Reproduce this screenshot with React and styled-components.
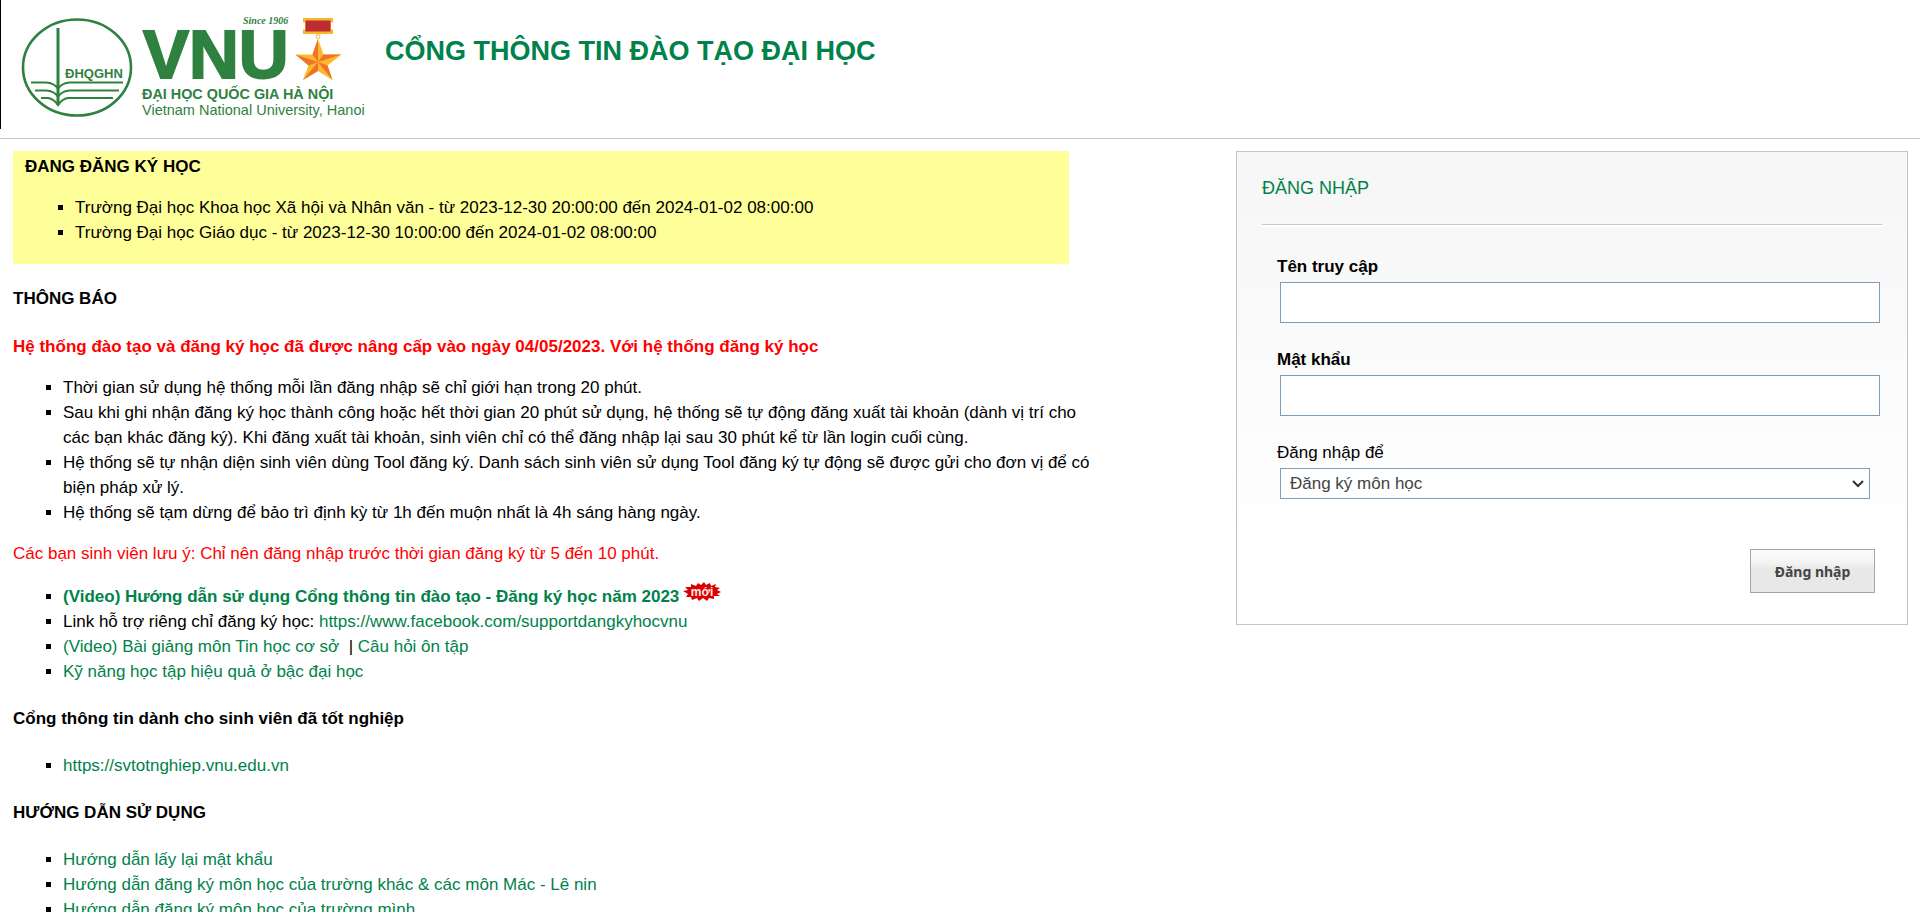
import React from "react";
import styled, { createGlobalStyle, css } from "styled-components";

const GREEN = "#00824a";

const GlobalStyle = createGlobalStyle`
  * { box-sizing: border-box; }
  body {
    margin: 0;
    background: #fff;
    color: #000;
    font: 17px/25px "Liberation Sans", Arial, sans-serif;
  }
`;

const Header = styled.header`
  display: flex;
  align-items: flex-start;
  height: 139px;
  border-bottom: 1px solid #c4c4c4;
`;

const LogoLink = styled.a`
  display: block;
  flex: none;
  width: 385px;
  height: 129px;
  border-left: 1px solid #000;
`;

const SiteTitle = styled.h1`
  margin: 35px 0 0;
  color: ${GREEN};
  font-size: 27px;
  line-height: 32px;
`;

const Columns = styled.div`
  display: flex;
  justify-content: space-between;
  align-items: flex-start;
  padding-top: 12px;
`;

const News = styled.main`
  width: 55%;
  margin-left: 13px;
`;

const Notice = styled.section`
  padding: 3px 12px;
  background: #ffff99;
`;

const headingText = css`
  margin: 0;
  font-size: 17px;
  font-weight: bold;
`;

const NoticeTitle = styled.h2`
  ${headingText}
`;

const SectionTitle = styled.h2`
  ${headingText}
  margin: 22px 0;
`;

const Alert = styled.h3`
  ${headingText}
  margin: 23px 0 16px;
  color: #ff0000;
`;

const Warning = styled.p`
  margin: 16px 0;
  color: #ff0000;
`;

const List = styled.ul`
  margin: 16px -24px 16px 0;
  padding-left: 50px;
  list-style: square;
`;

const TextLink = styled.a`
  color: ${GREEN};
  text-decoration: none;
  font-weight: ${(p) => (p.$strong ? "bold" : "normal")};
`;

const NewMark = styled.svg`
  width: 38px;
  height: 20px;
  margin-left: 4px;
`;

const LoginForm = styled.form`
  display: flex;
  flex-direction: column;
  width: 35%;
  margin-right: 12px;
  padding: 24px 25px 31px;
  border: 1px solid #c4c4c4;
  background: linear-gradient(#f6f6f6, #fff 85%);
`;

const LoginTitle = styled.h2`
  margin: 0 0 29px;
  padding-bottom: 24px;
  border-bottom: 1px solid #c8c8c8;
  box-shadow: 0 2px 0 #fff;
  color: ${GREEN};
  font-size: 18px;
  font-weight: normal;
  line-height: 24px;
`;

const Field = styled.div`
  display: flex;
  flex-direction: column;
  margin: 0 2px 24px 15px;
`;

const Label = styled.label`
  margin-bottom: 3px;
  font-weight: ${(p) => (p.$plain ? "normal" : "bold")};
`;

const control = css`
  border: 1px solid #7f9db9;
  border-radius: 0;
  background: #fff;
  color: #444;
  font: 17px "Liberation Sans", Arial, sans-serif;
`;

const TextInput = styled.input`
  ${control}
  height: 41px;
  margin-left: 3px;
  padding: 0 8px;
`;

const SelectBox = styled.div`
  position: relative;
  margin: 0 10px 0 3px;
`;

const Select = styled.select`
  ${control}
  display: block;
  appearance: none;
  width: 100%;
  height: 31px;
  padding: 0 24px 0 9px;
`;

const Chevron = styled.svg`
  position: absolute;
  top: 11px;
  right: 6px;
  width: 12px;
  height: 9px;
  pointer-events: none;
`;

const SubmitButton = styled.button`
  align-self: flex-end;
  width: 125px;
  height: 44px;
  margin: 26px 7px 0 0;
  border: 1px solid #a5a5a5;
  background: linear-gradient(#fbfbfb, #f4f4f4 30%, #e8e8e8 45%, #e8e8e8);
  color: #444;
  font: bold 14px "Noto Sans", Tahoma, sans-serif;
`;

function Logo() {
  return (
    <svg width="384" height="129" viewBox="1 0 384 129" role="img" aria-label="VNU">
      <g fill="none" stroke="#2f8140">
        <ellipse cx="77" cy="67.500" rx="54" ry="48" strokeWidth="2.600" />
        <path d="M58 28V105" strokeWidth="3" />
        <path d="M31 82.500H46Q54 83 58 88.500Q62 83 70 82.500H123" strokeWidth="2.200" />
        <path d="M35 90.500H46Q54 91 58 96.500Q62 91 70 90.500H119" strokeWidth="2.200" />
        <path d="M41 98H48Q54 99 58 105Q62 99 68 98H113" strokeWidth="2.200" />
      </g>
      <g fill="#2f8140" fontFamily="Liberation Sans, Arial, sans-serif">
        <text x="65" y="78" fontSize="13" fontWeight="bold">ĐHQGHN</text>
        <text x="143" y="78" fontSize="69" fontWeight="bold" stroke="#2f8140" strokeWidth="2">VNU</text>
        <text x="142" y="99" fontSize="14.4" fontWeight="bold">ĐẠI HỌC QUỐC GIA HÀ NỘI</text>
        <text x="142" y="115" fontSize="14.500">Vietnam National University, Hanoi</text>
        <text x="243" y="24" fontSize="10" fontStyle="italic" fontWeight="bold" fontFamily="Liberation Serif, serif">Since 1906</text>
      </g>
      <path d="M303 18H333V22.500H331V29.500H333V34H303V29.500H305V22.500H303Z" fill="#f9b62b" />
      <rect x="305.500" y="20.500" width="25" height="11" fill="#bd2c30" />
      <circle cx="318" cy="36.500" r="2" fill="none" stroke="#f5b52a" />
      <path d="M318 39L323.500 54.500L341.500 54.500L327.500 65.500L332.500 80L318 71L303 80L308.500 65.500L295.500 54.500L312.500 54.500Z" fill="#fdb92a" />
      <path d="M318 39V62L312.500 54.500ZM295.500 54.500L318 62L308.500 65.500ZM303 80L318 62V71ZM332.500 80L318 62L327.500 65.500ZM341.500 54.500L318 62L323.500 54.500Z" fill="#f0712a" />
    </svg>
  );
}

function NewBadge() {
  return (
    <NewMark viewBox="0 0 38 20" role="img" aria-label="mới">
      <path
        d="M0 9L5 8L2 5L8 5L8 2L13 4L15 1L18 3L21 0L23 3L27 1L28 4L33 2L32 5L37 6L34 8L38 10L34 12L37 14L31 14L31 17L26 16L24 19L20 16L16 19L14 16L9 18L8 15L3 15L5 12Z"
        fill="#d90000"
      />
      <text x="19" y="14" textAnchor="middle" fill="#fde8e8" fontSize="12" fontWeight="bold" fontFamily="Liberation Sans, Arial, sans-serif">
        mới
      </text>
    </NewMark>
  );
}

export default function App() {
  return (
    <>
      <GlobalStyle />
      <Header>
        <LogoLink href="#"><Logo /></LogoLink>
        <SiteTitle>CỔNG THÔNG TIN ĐÀO TẠO ĐẠI HỌC</SiteTitle>
      </Header>
      <Columns>
        <News>
          <Notice>
            <NoticeTitle>ĐANG ĐĂNG KÝ HỌC</NoticeTitle>
            <List>
              <li>Trường Đại học Khoa học Xã hội và Nhân văn - từ 2023-12-30 20:00:00 đến 2024-01-02 08:00:00</li>
              <li>Trường Đại học Giáo dục - từ 2023-12-30 10:00:00 đến 2024-01-02 08:00:00</li>
            </List>
          </Notice>
          <SectionTitle>THÔNG BÁO</SectionTitle>
          <Alert>
            Hệ thống đào tạo và đăng ký học đã được nâng cấp vào ngày 04/05/2023. Với hệ thống đăng ký học
          </Alert>
          <List>
            <li>Thời gian sử dụng hệ thống mỗi lần đăng nhập sẽ chỉ giới hạn trong 20 phút.</li>
            <li>
              Sau khi ghi nhận đăng ký học thành công hoặc hết thời gian 20 phút sử dụng, hệ thống sẽ tự động
              đăng xuất tài khoản (dành vị trí cho các bạn khác đăng ký). Khi đăng xuất tài khoản, sinh viên chỉ
              có thể đăng nhập lại sau 30 phút kể từ lần login cuối cùng.
            </li>
            <li>
              Hệ thống sẽ tự nhận diện sinh viên dùng Tool đăng ký. Danh sách sinh viên sử dụng Tool đăng ký tự
              động sẽ được gửi cho đơn vị để có biện pháp xử lý.
            </li>
            <li>Hệ thống sẽ tạm dừng để bảo trì định kỳ từ 1h đến muộn nhất là 4h sáng hàng ngày.</li>
          </List>
          <Warning>Các bạn sinh viên lưu ý: Chỉ nên đăng nhập trước thời gian đăng ký từ 5 đến 10 phút.</Warning>
          <List>
            <li>
              <TextLink href="#" $strong>
                (Video) Hướng dẫn sử dụng Cổng thông tin đào tạo - Đăng ký học năm 2023
              </TextLink>
              <NewBadge />
            </li>
            <li>
              Link hỗ trợ riêng chỉ đăng ký học:{" "}
              <TextLink href="#">https://www.facebook.com/supportdangkyhocvnu</TextLink>
            </li>
            <li>
              <TextLink href="#">(Video) Bài giảng môn Tin học cơ sở</TextLink>
              &nbsp; | <TextLink href="#">Câu hỏi ôn tập</TextLink>
            </li>
            <li><TextLink href="#">Kỹ năng học tập hiệu quả ở bậc đại học</TextLink></li>
          </List>
          <SectionTitle>Cổng thông tin dành cho sinh viên đã tốt nghiệp</SectionTitle>
          <List>
            <li><TextLink href="#">https://svtotnghiep.vnu.edu.vn</TextLink></li>
          </List>
          <SectionTitle>HƯỚNG DẪN SỬ DỤNG</SectionTitle>
          <List>
            <li><TextLink href="#">Hướng dẫn lấy lại mật khẩu</TextLink></li>
            <li><TextLink href="#">Hướng dẫn đăng ký môn học của trường khác &amp; các môn Mác - Lê nin</TextLink></li>
            <li><TextLink href="#">Hướng dẫn đăng ký môn học của trường mình</TextLink></li>
          </List>
        </News>
        <LoginForm>
          <LoginTitle>ĐĂNG NHẬP</LoginTitle>
          <Field>
            <Label htmlFor="username">Tên truy cập</Label>
            <TextInput id="username" type="text" />
          </Field>
          <Field>
            <Label htmlFor="password">Mật khẩu</Label>
            <TextInput id="password" type="password" />
          </Field>
          <Field>
            <Label htmlFor="purpose" $plain>Đăng nhập để</Label>
            <SelectBox>
              <Select id="purpose">
                <option>Đăng ký môn học</option>
              </Select>
              <Chevron viewBox="0 0 12 9" aria-hidden="true">
                <path d="M1 2L6 7L11 2" fill="none" stroke="#333" strokeWidth="2" />
              </Chevron>
            </SelectBox>
          </Field>
          <SubmitButton type="button">Đăng nhập</SubmitButton>
        </LoginForm>
      </Columns>
    </>
  );
}
